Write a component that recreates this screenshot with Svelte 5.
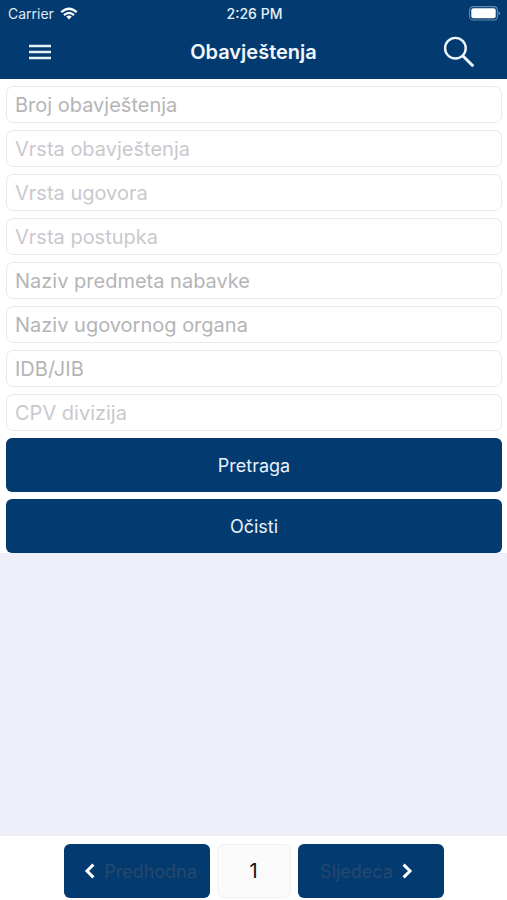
<script>
  const fields = [
    { id: 'broj', label: 'Broj obavještenja', kind: 'text' },
    { id: 'vrsta-obavjestenja', label: 'Vrsta obavještenja', kind: 'select' },
    { id: 'vrsta-ugovora', label: 'Vrsta ugovora', kind: 'select' },
    { id: 'vrsta-postupka', label: 'Vrsta postupka', kind: 'select' },
    { id: 'predmet', label: 'Naziv predmeta nabavke', kind: 'text' },
    { id: 'organ', label: 'Naziv ugovornog organa', kind: 'text' },
    { id: 'idb', label: 'IDB/JIB', kind: 'text' },
    { id: 'cpv', label: 'CPV divizija', kind: 'select' }
  ];
</script>

<div class="screen">
  <header>
    <div class="status">
      <div class="carrier">
        <span>Carrier</span>
        <svg width="18" height="13" viewBox="0 0 18 13" fill="none" stroke="#fff" stroke-width="2.3" aria-hidden="true">
          <path d="M1.3 5.2Q9 -1.8 16.7 5.2" />
          <path d="M4 8.1Q9 3.7 14 8.1" />
          <path d="M6.2 9.6Q9 7.4 11.8 9.6L9 12.5Z" fill="#fff" stroke="none" />
        </svg>
      </div>
      <span class="time">2:26 PM</span>
      <svg class="battery" width="32" height="15" viewBox="0 0 32 15" aria-hidden="true">
        <rect x="0.6" y="0.6" width="27.8" height="13.4" rx="3.5" fill="none" stroke="#6489b0" stroke-width="1.1" />
        <rect x="2.3" y="2.3" width="24.4" height="10" rx="2" fill="#fff" />
        <path d="M29.6 5Q32.2 7.3 29.6 9.6Z" fill="#7f9fc0" />
      </svg>
    </div>
    <div class="nav">
      <button class="icon" aria-label="Meni">
        <svg width="24" height="16" viewBox="0 0 24 16" stroke="#e6f1fc" stroke-width="2.6" aria-hidden="true">
          <path d="M1 2H23M1 8H23M1 14H23" />
        </svg>
      </button>
      <h1>Obavještenja</h1>
      <button class="icon search" aria-label="Traži">
        <svg width="32" height="32" viewBox="0 0 32 32" fill="none" stroke="#eef6ff" aria-hidden="true">
          <circle cx="12.4" cy="12.2" r="10.3" stroke-width="2.4" />
          <path d="M19.7 19.7L30.3 30.3" stroke-width="3" />
        </svg>
      </button>
    </div>
  </header>

  <form onsubmit={(e) => e.preventDefault()}>
    {#each fields as field (field.id)}
      {#if field.kind === 'select'}
        <select class="field" id={field.id} aria-label={field.label}>
          <option value="">{field.label}</option>
        </select>
      {:else}
        <input class="field" id={field.id} type="text" placeholder={field.label} aria-label={field.label} />
      {/if}
    {/each}
    <button class="action" type="submit">Pretraga</button>
    <button class="action" type="reset">Očisti</button>
  </form>

  <main></main>

  <footer>
    <button class="page previous" disabled>
      <svg width="11" height="16" viewBox="0 0 11 16" fill="none" stroke="#fff" stroke-width="3" aria-hidden="true">
        <path d="M9.4 1.6L3 8L9.4 14.4" />
      </svg>
      <span>Predhodna</span>
    </button>
    <output class="current">1</output>
    <button class="page next" disabled>
      <span>Sljedeća</span>
      <svg width="11" height="16" viewBox="0 0 11 16" fill="none" stroke="#fff" stroke-width="3" aria-hidden="true">
        <path d="M1.6 1.6L8 8L1.6 14.4" />
      </svg>
    </button>
  </footer>
</div>

<style>
  :global(body) {
    margin: 0;
  }

  .screen,
  .screen * {
    box-sizing: border-box;
  }

  .screen {
    display: flex;
    flex-direction: column;
    min-height: 100vh;
    background: #fff;
    font-family: Inter, "Liberation Sans", sans-serif;
  }

  button,
  input,
  select {
    margin: 0;
    font-family: inherit;
  }

  header {
    height: 79px;
    background: #033b71;
    color: #fff;
  }

  .status {
    display: grid;
    grid-template-columns: 1fr auto 1fr;
    align-items: center;
    height: 27px;
    padding: 0 6px 0 8px;
    font-size: 14px;
  }

  .carrier {
    display: flex;
    align-items: center;
    gap: 6px;
    color: #dfeaf5;
  }

  .time {
    font-weight: 500;
    color: #e6f0fa;
  }

  .battery {
    justify-self: end;
  }

  .nav {
    display: grid;
    grid-template-columns: 1fr auto 1fr;
    align-items: center;
    height: 50px;
    padding: 0 16px;
  }

  .icon {
    display: flex;
    align-items: center;
    justify-content: center;
    width: 48px;
    height: 48px;
    padding: 0;
    border: 0;
    background: none;
  }

  .search {
    justify-self: end;
    width: 64px;
  }

  h1 {
    margin: 0;
    font-size: 20px;
    font-weight: 600;
    color: #f2f8ff;
  }

  form {
    display: flex;
    flex-direction: column;
    gap: 7px;
    padding: 7px 5px 0 6px;
  }

  .field {
    width: 100%;
    height: 37px;
    padding: 0 8px;
    border: 1px solid #e9e9eb;
    border-radius: 7px;
    background: #fff;
    color: #222;
    font-size: 20px;
    appearance: none;
  }

  .field::placeholder {
    color: #b5b5b7;
    opacity: 1;
  }

  select.field {
    color: #c9c9cd;
  }

  .action {
    height: 54px;
    border: 0;
    border-radius: 6px;
    background: #033b71;
    color: #e8f2fc;
    font-size: 18px;
  }

  main {
    flex: 1;
    background: #eeeff9;
  }

  footer {
    display: flex;
    justify-content: center;
    gap: 7px;
    padding: 8px 0 2px;
  }

  .page {
    display: flex;
    align-items: center;
    justify-content: center;
    gap: 9px;
    width: 146px;
    height: 54px;
    padding: 0;
    border: 0;
    border-radius: 6px;
    background: #033b71;
    color: #26486c;
    font-size: 18px;
  }

  .previous {
    padding-left: 8px;
  }

  .next {
    padding-right: 8px;
  }

  .current {
    display: flex;
    align-items: center;
    justify-content: center;
    width: 74px;
    height: 54px;
    border: 1px solid #f1f1f2;
    border-radius: 7px;
    background: #fafafa;
    color: #111;
    font-size: 20px;
  }
</style>
